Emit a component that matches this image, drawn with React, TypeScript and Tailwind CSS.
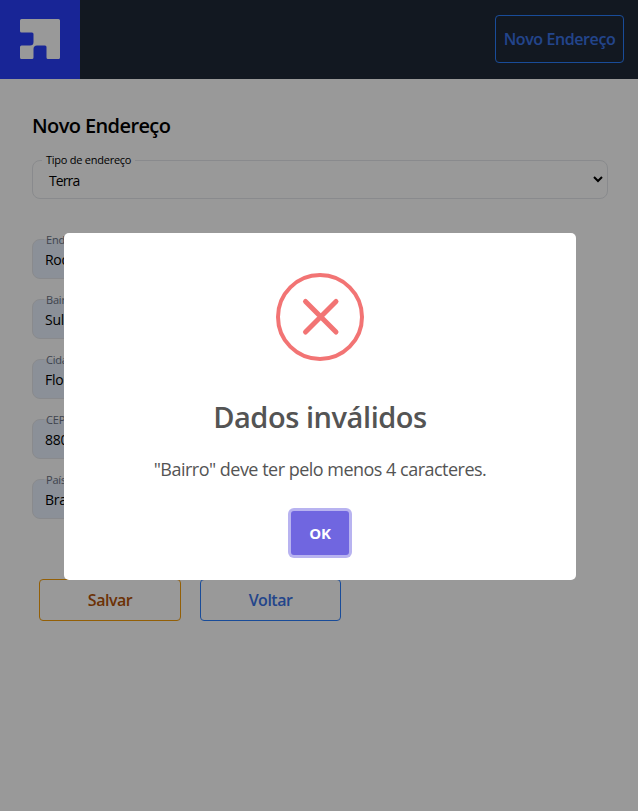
const fields = [
  { label: 'Endereço', value: 'Rodovia' },
  { label: 'Bairro', value: 'Sul' },
  { label: 'Cidade', value: 'Florianópolis' },
  { label: 'CEP', value: '88000-000' },
  { label: 'País', value: 'Brasil' },
];

function Logo() {
  return (
    <div className="flex h-[79px] w-20 justify-center bg-[#283efa] pt-[19px]">
      <svg width="40" height="40" viewBox="0 0 40 40" className="fill-white">
        <path d="M1.5 0H38.5Q40 0 40 1.5V38.5Q40 40 38.5 40H28Q26.500 40 26.500 38.500V28Q26.500 26.500 25 26.500H17Q13.500 26.500 13.500 30V38.500Q13.500 40 12 40H1.500Q0 40 0 38.500V28Q0 26.500 1.500 26.500H10Q13.500 26.500 13.500 23V15Q13.500 13.500 12 13.500H1.500Q0 13.500 0 12V1.500Q0 0 1.500 0Z" />
      </svg>
    </div>
  );
}

function Field({ label, value }: { label: string; value: string }) {
  return (
    <div className="relative h-10 w-[500px] rounded-lg border border-gray-200 bg-[#e8f0fe] pt-[10px] pl-3 text-[14px] leading-5 tracking-[-0.3px] text-black">
      <span className="absolute -top-px left-[11px] h-px w-16 bg-[#e8f0fe]" />
      <span className="absolute top-[-8px] left-[13px] text-[11px] leading-4 tracking-[-0.2px] text-gray-500">{label}</span>
      {value}
    </div>
  );
}

function Dialog() {
  return (
    <div className="fixed inset-0 bg-black/40 pt-[233px] pl-16">
      <div className="flex h-[347px] w-[512px] flex-col items-center rounded-[5px] bg-white pt-10 text-[#545454]">
        <svg width="88" height="88" viewBox="0 0 88 88" fill="none" stroke="#f27474">
          <circle cx="44" cy="44" r="42" strokeWidth="4" />
          <path d="M29.500 28.500L60 59M60 28.500L29.500 59" strokeWidth="5" strokeLinecap="round" />
        </svg>
        <h2 className="mt-9 text-[29px] leading-10 font-semibold tracking-[-0.45px] whitespace-nowrap">Dados inválidos</h2>
        <p className="mt-[19px] text-[18px] leading-[27px] tracking-[-0.51px] whitespace-nowrap">"Bairro" deve ter pelo menos 4 caracteres.</p>
        <button className="mt-7 h-11 w-[58px] rounded-[3px] bg-[#7066e0] text-[15px] font-bold tracking-[-0.2px] text-white ring-3 ring-[#b8b3f0]">OK</button>
      </div>
    </div>
  );
}

export default function App() {
  return (
    <div className="h-[811px] w-[638px] overflow-hidden bg-white font-['Open_Sans','Noto_Sans',sans-serif] text-black">
      <header className="flex h-[79px] items-center justify-between bg-[#1f2937] pr-[14px]">
        <Logo />
        <button className="mb-px h-12 w-[129px] rounded border border-blue-500 text-[16px] font-semibold tracking-[-0.4px] whitespace-nowrap text-[#3b74e8]">Novo Endereço</button>
      </header>
      <main className="px-8 pt-[33px]">
        <h1 className="text-[20px] leading-7 font-semibold tracking-[-0.6px]">Novo Endereço</h1>
        <div className="relative mt-5 flex h-[39px] w-[576px] items-center justify-between rounded-lg border border-gray-200 pt-[3px] pr-1 pl-4 text-[14px] leading-5">
          <span className="absolute -top-[9px] left-[9px] bg-white px-1 text-[11px] leading-4 tracking-[-0.25px] whitespace-nowrap">Tipo de endereço</span>
          <span className="tracking-[-0.9px]">Terra</span>
          <svg width="10" height="8" viewBox="0 0 10 8" fill="none" className="mb-[5px] stroke-black stroke-2">
            <path d="M1 2L5 6L9 2" />
          </svg>
        </div>
        <div className="mt-10 flex flex-col gap-5">
          {fields.map((field) => <Field key={field.label} {...field} />)}
        </div>
        <div className="mt-[60px] ml-[7px] flex gap-[19px] text-[16px] font-semibold tracking-[-0.5px]">
          <button className="h-[42px] w-[142px] rounded border border-[#f59e0b] text-[#b45309]">Salvar</button>
          <button className="h-[42px] w-[141px] rounded border border-blue-500 text-[#3b74e8]">Voltar</button>
        </div>
      </main>
      <Dialog />
    </div>
  );
}
